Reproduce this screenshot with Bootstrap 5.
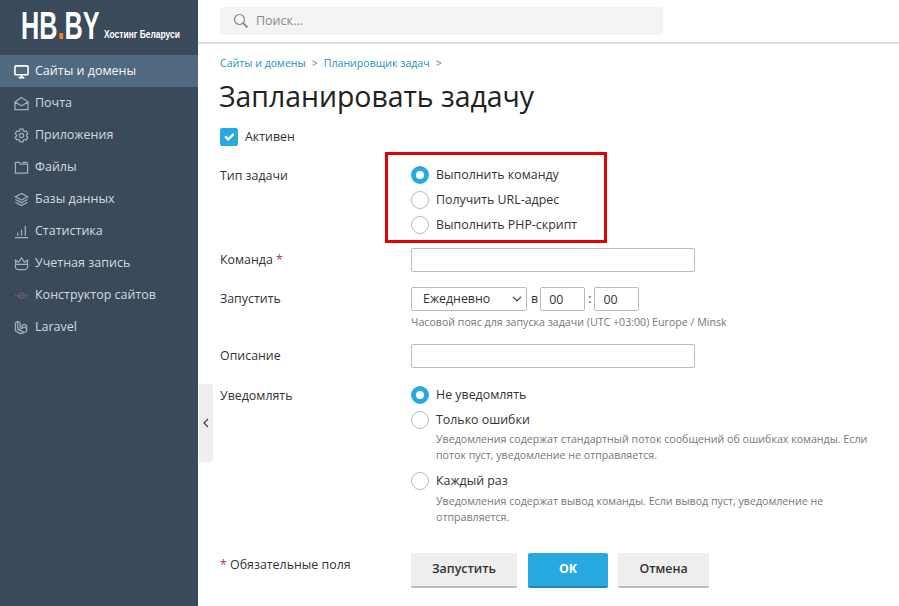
<!DOCTYPE html>
<html lang="ru"><head><meta charset="utf-8"><title>Запланировать задачу</title>
<link href="https://cdn.jsdelivr.net/npm/bootstrap@5.3.0/dist/css/bootstrap.min.css" rel="stylesheet">
<style>
html,body{height:100%;overflow:hidden}
body{font-family:"Open Sans",sans-serif;font-size:12.4px;color:#333;background:#fff}
.app-shell{height:606px;position:relative}
.side-panel{width:198px;background:#3b4a5b;flex:none}
.brand-zone{height:55px;padding:6px 0 0 21px;color:#fff}
.brand-big{font-family:"Liberation Sans",sans-serif;font-weight:700;font-size:38px;line-height:41px;transform:scaleX(.665);transform-origin:left;width:83px;flex:none;white-space:nowrap}
.brand-dot{color:#f58220}
.brand-small{font-family:"Liberation Sans",sans-serif;font-weight:700;font-size:11px;line-height:14px;margin-top:21px;white-space:nowrap;transform:scaleX(.77);transform-origin:left}
.side-link{height:32px;padding:0 0 0 14px;gap:6px;color:#d3d9df;font-size:12.5px;text-decoration:none}
.side-link:hover{color:#d3d9df}
.side-link.active,.side-link.active:hover{background:#526a7f;color:#f4f6f8}
.side-link svg{width:15px;height:15px;flex:none;fill:none;stroke:#a3aeb9;stroke-width:1.3}
.side-link.active svg{stroke:#fff;stroke-width:1.7}
.side-link .orbit-ring{stroke:#8a4f56}
.side-link .orbit-band{stroke:#3d6f96;stroke-width:1.6;stroke-dasharray:2 1}
.top-strip{height:44px;border-bottom:2px solid #ddd;padding:7px 0 0 22px}
.find-box{width:443px;height:28px;background:#f4f4f4;border-radius:3px;padding-left:13px;gap:7px;color:#888;font-size:12.5px}
.page-body{padding:12px 0 0 22px}
.crumbs{font-size:10.6px;line-height:15px;margin:0;--bs-breadcrumb-divider:'>';--bs-breadcrumb-item-padding-x:6px}
.crumbs a{color:#2a8fbd;text-decoration:none}
.crumbs .breadcrumb-item+.breadcrumb-item::before{color:#777}
.crumb-end::after{content:'>';color:#777;margin-left:6px}
.page-title{font-size:28.4px;font-weight:400;color:#222;line-height:39px;margin:6px 0 0 -1px}
.check-line{height:18px;margin-top:12px;gap:7px}
.check-line label{line-height:18px}
.form-check-input{width:18px;height:18px;margin:0;flex:none;border-color:#bbb;box-shadow:none}
.form-check-input[type=checkbox]{border-radius:2px}
.form-check-input:checked[type=checkbox]{background-color:#28a9e0;border-color:#28a9e0}
.form-check-input:checked[type=radio]{background-image:none;background-color:#fff;border:5.5px solid #28a9e0}
.form-line{display:flex}
.form-key{width:191px;flex:none;line-height:18px;margin:0;padding-top:3px}
.form-key.low{padding-top:5px}
.req{color:#c0324b}
.opt{height:25px;gap:7px}
.opt label{line-height:18px}
.marked-group{position:relative}
.red-box{position:absolute;left:-26px;top:-10px;width:222px;height:91px;border:3px solid #e30000;pointer-events:none}
.line-type{margin-top:16px}
.line-command{margin-top:11px}
.line-run{margin-top:15px}
.line-desc{margin-top:14px}
.line-notify{margin-top:14px}
.line-actions{margin-top:28px}
.form-control.txt-field{width:284px;height:24px;min-height:0;padding:0 8px;font-size:12.4px;border:1px solid #bbb;border-radius:2px}
.form-control.time-field{width:45px;height:24px;min-height:0;padding:0 8px;font-size:12.4px;color:#333;border:1px solid #bbb;border-radius:2px;line-height:22px}
.form-select.sel-field{width:116px;height:24px;padding:0 16px 0 11px;font-size:12.4px;color:#333;border:1px solid #bbb;border-radius:2px;background-position:right 3px center;background-size:12px 10px}
.at-sign{margin:0 2px 0 4px}
.colon-sign{margin:0 3px}
.hint{color:#777;font-size:10.65px;line-height:16px}
.hint-zone{margin-top:3px}
.hint-block{margin-left:25px;width:440px;line-height:15.5px}
.hint-block.tall{line-height:16px}
.opt.after-hint{margin-top:5px}
.btn.act-btn{height:35px;border:0;border-bottom:2px solid #bbb;border-radius:2px;background:#eee;color:#333;font-weight:600;font-size:12.4px;padding:0}
.btn.act-btn.main{background:#28a9e0;border-bottom-color:#1d87b5;color:#fff;font-weight:700}
.btn-run{width:106px}
.btn.btn-ok{width:80px;margin-left:11px}
.btn.btn-cancel{width:91px;margin-left:10px}
.fold-tab{position:absolute;left:199px;top:384px;width:14px;height:78px;background:#eee;border-radius:0 3px 3px 0}
</style></head><body>
<div class="app-shell d-flex">
<nav class="side-panel d-flex flex-column">
 <div class="brand-zone d-flex"><div class="brand-big">HB<span class="brand-dot">.</span>BY</div><div class="brand-small">Хостинг Беларуси</div></div>
 <div class="nav flex-column">
 <a class="nav-link side-link active d-flex align-items-center" href="#"><svg viewBox="0 0 16 16"><rect x="1" y="2" width="14" height="9.500" rx="1"/><path d="M5 14.500h6M8 11.500v3"/></svg>Сайты и домены</a>
 <a class="nav-link side-link d-flex align-items-center" href="#"><svg viewBox="0 0 16 16"><path d="M1 6.500 8 1.500l7 5v8H1zM1 6.500 8 10.500l7-4"/></svg>Почта</a>
 <a class="nav-link side-link d-flex align-items-center" href="#"><svg viewBox="0 0 16 16"><circle cx="8" cy="8" r="2.300"/><path d="M6.310 1.210H9.690L10.020 3 11.320 3.740 13.040 3.140 14.730 6.070 13.350 7.250V8.750L14.730 9.930 13.040 12.860 11.320 12.260 10.020 13 9.690 14.790H6.310L5.980 13 4.680 12.260 2.960 12.860 1.270 9.930 2.650 8.750V7.250L1.270 6.070 2.960 3.140 4.680 3.740 5.980 3z"/></svg>Приложения</a>
 <a class="nav-link side-link d-flex align-items-center" href="#"><svg viewBox="0 0 16 16"><path d="M1.500 2.500h4l1.500 2h7.500v9.500h-13zM9 2.500h5.500"/></svg>Файлы</a>
 <a class="nav-link side-link d-flex align-items-center" href="#"><svg viewBox="0 0 16 16"><path d="M8 1.500 14.500 5 8 8.500 1.500 5zM1.500 8 8 11.500 14.500 8M1.500 11 8 14.500l6.500-3.500"/></svg>Базы данных</a>
 <a class="nav-link side-link d-flex align-items-center" href="#"><svg viewBox="0 0 16 16"><path d="M1 14.500h14M4 12.500V9M8 12.500V6M12 12.500V2"/></svg>Статистика</a>
 <a class="nav-link side-link d-flex align-items-center" href="#"><svg viewBox="0 0 16 16"><path d="M2 9 1.500 4.500 5 6.500 8 2l3 4.500 3.500-2L14 9zM1.500 9h13v2.500c0 2-2 3-3 3h-7c-1 0-3-1-3-3z"/></svg>Учетная запись</a>
 <a class="nav-link side-link d-flex align-items-center" href="#"><svg viewBox="0 0 16 16"><circle class="orbit-ring" cx="8" cy="8" r="3"/><path class="orbit-band" d="M1 8h14"/></svg>Конструктор сайтов</a>
 <a class="nav-link side-link d-flex align-items-center" href="#"><svg viewBox="0 0 16 16"><path d="M1.500 3 4 1.500 6.500 3v8L11 13.500l2.500-1.500V9L11 7.500 8.500 9V6l2.500-1.500L13.500 6v3M1.500 3v8.500L6.500 14.500 11 13.500M4 1.500v8.500l2.500 1"/></svg>Laravel</a>
 </div>
</nav>
<main class="flex-grow-1">
 <div class="top-strip"><div class="find-box d-flex align-items-center"><svg width="16" height="16" viewBox="0 0 16 16" fill="none" stroke="#888" stroke-width="1.200"><circle cx="6.500" cy="6.500" r="5"/><path d="m10.200 10.200 4.300 4.300" stroke-width="1.800"/></svg>Поиск...</div></div>
 <div class="page-body">
  <ol class="breadcrumb crumbs"><li class="breadcrumb-item"><a href="#">Сайты и домены</a></li><li class="breadcrumb-item crumb-end"><a href="#">Планировщик задач</a></li></ol>
  <h1 class="page-title">Запланировать задачу</h1>
  <form>
  <div class="check-line d-flex align-items-center"><input class="form-check-input" type="checkbox" id="act" checked><label for="act">Активен</label></div>
  <div class="form-line line-type">
   <div class="form-key low">Тип задачи</div>
   <div class="marked-group"><div class="red-box"></div>
    <div class="opt d-flex align-items-center"><input class="form-check-input" type="radio" name="kind" id="k1" checked><label for="k1">Выполнить команду</label></div>
    <div class="opt d-flex align-items-center"><input class="form-check-input" type="radio" name="kind" id="k2"><label for="k2">Получить URL-адрес</label></div>
    <div class="opt d-flex align-items-center"><input class="form-check-input" type="radio" name="kind" id="k3"><label for="k3">Выполнить PHP-скрипт</label></div>
   </div>
  </div>
  <div class="form-line line-command">
   <label class="form-key" for="cmd">Команда <span class="req">*</span></label><input class="form-control txt-field" id="cmd" type="text">
  </div>
  <div class="form-line line-run">
   <div class="form-key">Запустить</div>
   <div>
    <div class="d-flex align-items-center"><select class="form-select sel-field"><option>Ежедневно</option></select><span class="at-sign">в</span><input class="form-control time-field" type="text" value="00"><span class="colon-sign">:</span><input class="form-control time-field" type="text" value="00"></div>
    <div class="hint hint-zone">Часовой пояс для запуска задачи (UTC +03:00) Europe / Minsk</div>
   </div>
  </div>
  <div class="form-line line-desc">
   <label class="form-key" for="dsc">Описание</label><input class="form-control txt-field" id="dsc" type="text">
  </div>
  <div class="form-line line-notify">
   <div class="form-key low">Уведомлять</div>
   <div>
    <div class="opt d-flex align-items-center"><input class="form-check-input" type="radio" name="note" id="n1" checked><label for="n1">Не уведомлять</label></div>
    <div class="opt d-flex align-items-center"><input class="form-check-input" type="radio" name="note" id="n2"><label for="n2">Только ошибки</label></div>
    <div class="hint hint-block">Уведомления содержат стандартный поток сообщений об ошибках команды. Если поток пуст, уведомление не отправляется.</div>
    <div class="opt after-hint d-flex align-items-center"><input class="form-check-input" type="radio" name="note" id="n3"><label for="n3">Каждый раз</label></div>
    <div class="hint hint-block tall">Уведомления содержат вывод команды. Если вывод пуст, уведомление не отправляется.</div>
   </div>
  </div>
  <div class="form-line line-actions">
   <div class="form-key"><span class="req">*</span> Обязательные поля</div>
   <div class="d-flex"><button type="button" class="btn act-btn btn-run">Запустить</button><button type="button" class="btn act-btn main btn-ok">OK</button><button type="button" class="btn act-btn btn-cancel">Отмена</button></div>
  </div>
  </form>
 </div>
</main>
<div class="fold-tab d-flex align-items-center justify-content-center"><svg width="6" height="10" viewBox="0 0 6 10" fill="none" stroke="#444" stroke-width="1.300"><path d="M5 1 1 5l4 4"/></svg></div>
</div>
<script src="https://cdn.jsdelivr.net/npm/bootstrap@5.3.0/dist/js/bootstrap.bundle.min.js"></script>
</body></html>
